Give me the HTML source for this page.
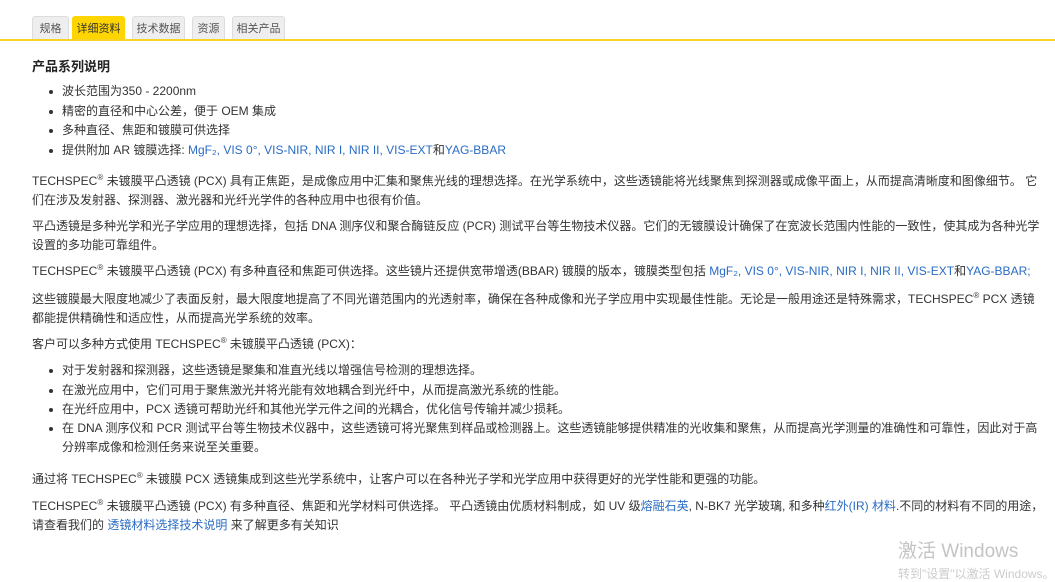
<!DOCTYPE html>
<html><head><meta charset="utf-8"><style>
body{margin:0;width:1055px;height:573px;background:#fff;overflow:hidden;position:relative;font-family:"Liberation Sans","Noto Sans CJK SC",sans-serif;color:#333;font-size:12px}
.l{position:absolute;white-space:nowrap;line-height:16px}
.tab{position:absolute;top:16px;height:23px;background:#eee;border:1px solid #ddd;border-bottom:none;border-radius:3px 3px 0 0;font-size:11px;color:#555;line-height:24px;text-align:center;box-sizing:border-box}
.a{color:#2a6cc4}
.d{position:absolute;width:4px;height:4px;border-radius:50%;background:#333}
sup{font-size:8px;line-height:0}
</style></head><body>
<div class="tab" style="left:32px;width:37px">规格</div>
<div class="tab" style="left:72px;width:53px;background:#ffd500;border-color:#ffd500;color:#333">详细资料</div>
<div class="tab" style="left:132px;width:53px">技术数据</div>
<div class="tab" style="left:192px;width:33px">资源</div>
<div class="tab" style="left:232px;width:53px">相关产品</div>
<div style="position:absolute;left:0;top:39px;width:1055px;height:2px;background:#f5d328"></div>

<div class="l" style="left:32px;top:59px;font-size:13px;font-weight:bold;color:#222">产品系列说明</div>
<div class="d" style="left:49px;top:90px"></div><div class="l" style="left:62px;top:83px">波长范围为350 - 2200nm</div>
<div class="d" style="left:49px;top:110px"></div><div class="l" style="left:62px;top:103px">精密的直径和中心公差，便于 OEM 集成</div>
<div class="d" style="left:49px;top:129px"></div><div class="l" style="left:62px;top:122px">多种直径、焦距和镀膜可供选择</div>
<div class="d" style="left:49px;top:149px"></div><div class="l" style="left:62px;top:142px">提供附加 AR 镀膜选择: <span class="a">MgF₂, VIS 0°, VIS-NIR, NIR I, NIR II, VIS-EXT</span>和<span class="a">YAG-BBAR</span></div>

<div class="l" style="left:32px;top:173px">TECHSPEC<sup>®</sup> 未镀膜平凸透镜 (PCX) 具有正焦距，是成像应用中汇集和聚焦光线的理想选择。在光学系统中，这些透镜能将光线聚焦到探测器或成像平面上，从而提高清晰度和图像细节。 它</div>
<div class="l" style="left:32px;top:192px">们在涉及发射器、探测器、激光器和光纤光学件的各种应用中也很有价值。</div>
<div class="l" style="left:32px;top:218px">平凸透镜是多种光学和光子学应用的理想选择，包括 DNA 测序仪和聚合酶链反应 (PCR) 测试平台等生物技术仪器。它们的无镀膜设计确保了在宽波长范围内性能的一致性，使其成为各种光学</div>
<div class="l" style="left:32px;top:237px">设置的多功能可靠组件。</div>
<div class="l" style="left:32px;top:263px">TECHSPEC<sup>®</sup> 未镀膜平凸透镜 (PCX) 有多种直径和焦距可供选择。这些镜片还提供宽带增透(BBAR) 镀膜的版本，镀膜类型包括 <span class="a">MgF₂, VIS 0°, VIS-NIR, NIR I, NIR II, VIS-EXT</span>和<span class="a">YAG-BBAR;</span></div>
<div class="l" style="left:32px;top:291px">这些镀膜最大限度地减少了表面反射，最大限度地提高了不同光谱范围内的光透射率，确保在各种成像和光子学应用中实现最佳性能。无论是一般用途还是特殊需求，TECHSPEC<sup>®</sup> PCX 透镜</div>
<div class="l" style="left:32px;top:310px">都能提供精确性和适应性，从而提高光学系统的效率。</div>
<div class="l" style="left:32px;top:336px">客户可以多种方式使用 TECHSPEC<sup>®</sup> 未镀膜平凸透镜 (PCX)：</div>
<div class="d" style="left:49px;top:369px"></div><div class="l" style="left:62px;top:362px">对于发射器和探测器，这些透镜是聚集和准直光线以增强信号检测的理想选择。</div>
<div class="d" style="left:49px;top:389px"></div><div class="l" style="left:62px;top:382px">在激光应用中，它们可用于聚焦激光并将光能有效地耦合到光纤中，从而提高激光系统的性能。</div>
<div class="d" style="left:49px;top:408px"></div><div class="l" style="left:62px;top:401px">在光纤应用中，PCX 透镜可帮助光纤和其他光学元件之间的光耦合，优化信号传输并减少损耗。</div>
<div class="d" style="left:49px;top:427px"></div><div class="l" style="left:62px;top:420px">在 DNA 测序仪和 PCR 测试平台等生物技术仪器中，这些透镜可将光聚焦到样品或检测器上。这些透镜能够提供精准的光收集和聚焦，从而提高光学测量的准确性和可靠性，因此对于高</div>
<div class="l" style="left:62px;top:439px">分辨率成像和检测任务来说至关重要。</div>
<div class="l" style="left:32px;top:471px">通过将 TECHSPEC<sup>®</sup> 未镀膜 PCX 透镜集成到这些光学系统中，让客户可以在各种光子学和光学应用中获得更好的光学性能和更强的功能。</div>
<div class="l" style="left:32px;top:498px">TECHSPEC<sup>®</sup> 未镀膜平凸透镜 (PCX) 有多种直径、焦距和光学材料可供选择。 平凸透镜由优质材料制成，如 UV 级<span class="a">熔融石英</span>, N-BK7 光学玻璃, 和多种<span class="a">红外(IR) 材料</span>.不同的材料有不同的用途，</div>
<div class="l" style="left:32px;top:517px">请查看我们的 <span class="a">透镜材料选择技术说明</span> 来了解更多有关知识</div>

<div class="l" style="left:898px;top:540px;font-size:19px;line-height:24px;color:#c4c4c4">激活 Windows</div>
<div class="l" style="left:898px;top:566px;font-size:12px;color:#ccc">转到"设置"以激活 Windows。</div>
</body></html>
